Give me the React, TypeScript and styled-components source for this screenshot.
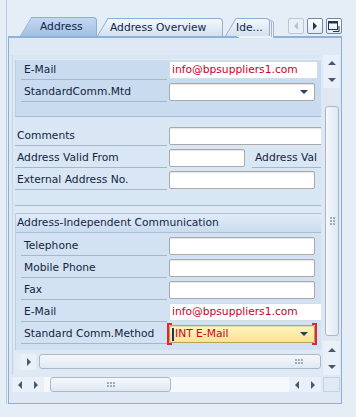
import React from 'react';
import styled, { createGlobalStyle, css } from 'styled-components';

const GlobalStyle = createGlobalStyle`
  html, body {
    margin: 0;
    padding: 0;
    background: #e5edf6;
  }
  body {
    width: 356px;
    height: 417px;
    overflow: hidden;
    font-family: "DejaVu Sans", "Liberation Sans", sans-serif;
    font-size: 10.7px;
    color: #13233f;
  }
  * { box-sizing: border-box; }
`;

const Page = styled.div`
  height: 417px;
  padding-left: 6px;
`;

const Frame = styled.div`
  width: 337px;
  height: 404px;
  border-left: 1px solid #b4c8de;
  padding-left: 1px;
  display: flex;
  flex-direction: column;
`;

// ---------- tab strip ----------

const TabStrip = styled.div`
  height: 36px;
  display: flex;
  align-items: flex-end;
  padding-left: 12px;
`;

const tabBg = (active?: boolean) =>
  active
    ? 'linear-gradient(#c3d8ef, #a2c0e3)'
    : 'linear-gradient(#f3f7fc, #d2e1f1)';

const Tab = styled.div<{ $active?: boolean; $gap?: number }>`
  position: relative;
  height: ${p => (p.$active ? 19 : 18)}px;
  margin-left: ${p => p.$gap ?? 0}px;
  padding-left: 11px;
  z-index: ${p => (p.$active ? 2 : 1)};
  &::before {
    content: '';
    position: absolute;
    left: 0;
    top: 0;
    bottom: 0;
    width: 20px;
    background: ${p => tabBg(p.$active)};
    border-left: 1px solid #8daed5;
    border-top: 1px solid #8daed5;
    transform-origin: bottom left;
    transform: skewX(-31deg);
  }
`;

const TabBody = styled.div<{ $active?: boolean; $w: number; $pad: number; $stacked?: boolean }>`
  position: relative;
  width: ${p => p.$w}px;
  height: 100%;
  padding-left: ${p => p.$pad}px;
  background: ${p => tabBg(p.$active)};
  border-top: 1px solid #8daed5;
  border-right: 1px solid #8daed5;
  border-top-right-radius: 4px;
  line-height: 17px;
  color: #102647;
  white-space: nowrap;
  ${p =>
    p.$stacked &&
    css`
      box-shadow: 1px 1px 0 0 #eef3fa, 2px 1px 0 0 #9db6d3, 3px 2px 0 0 #eef3fa, 4px 2px 0 0 #9db6d3;
    `}
`;

const TabNav = styled.div`
  align-self: flex-start;
  margin: 18px 1px 0 auto;
  display: flex;
  gap: 3px;
`;

const NavButton = styled.div<{ $disabled?: boolean }>`
  width: 16px;
  height: 16px;
  border: 1px solid ${p => (p.$disabled ? '#b6c7db' : '#6f89aa')};
  border-radius: 2px;
  background: ${p => (p.$disabled ? '#e9eff7' : 'linear-gradient(#ffffff, #e2eaf4)')};
  display: flex;
  align-items: center;
  justify-content: center;
`;

// ---------- arrows ----------

const Arrow = styled.span<{ $dir: 'up' | 'down' | 'left' | 'right'; $color?: string; $size?: number }>`
  width: 0;
  height: 0;
  ${p => {
    const c = p.$color ?? '#47586e';
    const s = p.$size ?? 4;
    switch (p.$dir) {
      case 'up':
        return `border-left:${s}px solid transparent;border-right:${s}px solid transparent;border-bottom:${s}px solid ${c};`;
      case 'down':
        return `border-left:${s}px solid transparent;border-right:${s}px solid transparent;border-top:${s}px solid ${c};`;
      case 'left':
        return `border-top:${s}px solid transparent;border-bottom:${s}px solid transparent;border-right:${s}px solid ${c};`;
      default:
        return `border-top:${s}px solid transparent;border-bottom:${s}px solid transparent;border-left:${s}px solid ${c};`;
    }
  }}
`;

// ---------- panel ----------

const Panel = styled.div`
  flex: 1;
  width: 334px;
  border: 1px solid #8daed5;
  border-top: 2px solid #8fb0d8;
  background: #dfe9f5;
  padding: 17px 1px 11px 3px;
  display: grid;
  grid-template-columns: 1fr 17px;
  grid-template-rows: 1fr 15px;
  column-gap: 2px;
  row-gap: 2px;
`;

const ScrollArea = styled.div`
  border-left: 1px solid #c3d5e9;
  padding-left: 2px;
  overflow: hidden;
  display: flex;
  flex-direction: column;
`;

const Section = styled.div`
  padding-top: 4px;
  padding-bottom: 13px;
  border-bottom: 1px solid #a9bcd1;
  background: #d9e6f4;
`;

const GroupBox = styled.div`
  height: 58px;
  background: #c9dbef;
  border-top: 1px solid #e4edf8;
  border-left: 1px solid #b8cce2;
  border-bottom: 1px solid #a7bbd2;
  padding-left: 5px;
`;

const Rows = styled.div`
  margin-top: 9px;
`;

const Group = styled.div`
  margin-top: 7px;
  background: #d3e2f3;
  border-left: 1px solid #b8cce2;
  padding-bottom: 4px;
`;

const GroupHeader = styled.div`
  height: 20px;
  border-top: 1px solid #a9bfd8;
  border-bottom: 1px solid #a9bfd8;
  background: linear-gradient(#e2ecf7, #c9dbee);
  line-height: 18px;
  padding-left: 1px;
  white-space: nowrap;
  color: #13264a;
`;

const GroupRows = styled.div`
  padding: 3px 0 0 5px;
`;

const Row = styled.div`
  height: 22px;
  display: flex;
  align-items: flex-start;
  white-space: nowrap;
`;

const Label = styled.div<{ $w: number; $pad: number; $ml?: number }>`
  flex: none;
  width: ${p => p.$w}px;
  height: 20px;
  margin-left: ${p => p.$ml ?? 0}px;
  padding-left: ${p => p.$pad}px;
  line-height: 19px;
  border-bottom: 1px solid #a6b7ca;
  overflow: hidden;
`;

const Field = styled.div<{ $w: number; $out?: boolean; $focus?: boolean }>`
  position: relative;
  flex: none;
  width: ${p => p.$w}px;
  height: 18px;
  margin: 1px 0 0 2px;
  border: 1px solid ${p => (p.$out ? '#d3dde8' : p.$focus ? '#b9a25a' : '#a9a9a9')};
  border-radius: 2px;
  background: ${p => (p.$focus ? 'linear-gradient(#fff3bf, #fbe38f)' : '#ffffff')};
  box-shadow: ${p => (p.$out ? 'none' : 'inset 0 1px 1px rgba(0,0,0,0.1)')};
  color: #d0002c;
  line-height: 16px;
  padding-left: 2px;
  display: flex;
  align-items: center;
`;

const DropArrow = styled.span`
  position: absolute;
  right: 6px;
  top: 6px;
  width: 0;
  height: 0;
  border-left: 4px solid transparent;
  border-right: 4px solid transparent;
  border-top: 4px solid #263d63;
`;

const Bracket = styled.span<{ $side: 'left' | 'right' }>`
  position: absolute;
  top: -3px;
  bottom: -3px;
  width: 5px;
  ${p => (p.$side === 'left' ? 'left: -3px;' : 'right: -3px;')}
  border: 2px solid #e0262e;
  ${p => (p.$side === 'left' ? 'border-right: none;' : 'border-left: none;')}
`;

const Caret = styled.span`
  width: 2px;
  height: 13px;
  margin-right: 1px;
  background: #1d2f66;
`;

// ---------- scroll bars ----------

const InnerHScroll = styled.div`
  margin-top: 4px;
  height: 16px;
  display: flex;
  gap: 3px;
`;

const Spacer = styled.div`
  width: 6px;
  margin-right: -3px;
  background: #e4ecf5;
`;

const SBtn = styled.div<{ $h?: number; $w?: number }>`
  flex: none;
  width: ${p => p.$w ?? 16}px;
  height: ${p => p.$h ?? 16}px;
  background: #e9f0f8;
  display: flex;
  align-items: center;
  justify-content: center;
`;

const HThumb = styled.div<{ $w?: number; $ml?: number; $gripEnd?: boolean }>`
  ${p => (p.$w ? `width: ${p.$w}px; flex: none;` : 'flex: 1;')}
  margin-left: ${p => p.$ml ?? 0}px;
  height: 15px;
  border: 1px solid #a9b8c9;
  border-radius: 3px;
  background: linear-gradient(#f5f8fc, #dfe8f2);
  display: flex;
  align-items: center;
  justify-content: ${p => (p.$gripEnd ? 'flex-end' : 'center')};
  padding-right: ${p => (p.$gripEnd ? 17 : 0)}px;
`;

const VScroll = styled.div`
  display: flex;
  flex-direction: column;
  background: #e3ebf4;
`;

const VTrack = styled.div`
  flex: 1;
  background: #dfe8f2;
  padding: 18px 1px 0 2px;
`;

const VThumb = styled.div`
  height: 230px;
  border: 1px solid #a9b8c9;
  border-radius: 3px;
  background: linear-gradient(90deg, #f5f8fc, #dfe8f2);
  display: flex;
  align-items: center;
  justify-content: center;
`;

const HScroll = styled.div`
  display: flex;
  background: #e9f0f8;
`;

const HTrack = styled.div`
  flex: 1;
  display: flex;
  background: #f6f9fc;
`;

const Corner = styled.div`
  background: #e1eaf4;
  border: 1px solid #c6d5e5;
`;

const Grip = ({ vertical }: { vertical?: boolean }) => {
  const cols = vertical ? 2 : 3;
  const rows = vertical ? 3 : 2;
  const dots = [];
  for (let r = 0; r < rows; r++)
    for (let c = 0; c < cols; c++)
      dots.push(<rect key={`${r}-${c}`} x={c * 3} y={r * 3} width={2} height={2} fill="#9eacbd" />);
  return (
    <svg width={cols * 3 - 1} height={rows * 3 - 1}>
      {dots}
    </svg>
  );
};

const WindowIcon = () => (
  <svg width="12" height="11" viewBox="0 0 12 11">
    <rect x="0.5" y="0.5" width="9" height="8" fill="none" stroke="#24364f" />
    <rect x="0.5" y="0.5" width="9" height="2" fill="#24364f" />
    <path d="M11 5 V10.5 H5" fill="none" stroke="#24364f" />
  </svg>
);

const EMAIL = 'info@bpsuppliers1.com';

const App = () => {
  return (
    <Page>
      <GlobalStyle />
      <Frame>
        <TabStrip>
          <Tab $active>
            <TabBody $active $w={66} $pad={9}>Address</TabBody>
          </Tab>
          <Tab>
            <TabBody $w={115} $pad={2}>Address Overview</TabBody>
          </Tab>
          <Tab $gap={2}>
            <TabBody $w={34} $pad={0} $stacked>Ide...</TabBody>
          </Tab>
          <TabNav>
            <NavButton $disabled>
              <Arrow $dir="left" $color="#b3c2d4" />
            </NavButton>
            <NavButton>
              <Arrow $dir="right" $color="#22344d" />
            </NavButton>
            <NavButton>
              <WindowIcon />
            </NavButton>
          </TabNav>
        </TabStrip>

        <Panel>
          <ScrollArea>
            <Section>
              <GroupBox>
                <Row>
                  <Label $w={146} $pad={3}>E-Mail</Label>
                  <Field $w={149} $out>{EMAIL}</Field>
                </Row>
                <Row>
                  <Label $w={146} $pad={3}>StandardComm.Mtd</Label>
                  <Field $w={146}>
                    <DropArrow />
                  </Field>
                </Row>
              </GroupBox>
              <Rows>
                <Row>
                  <Label $w={152} $pad={2}>Comments</Label>
                  <Field $w={154} />
                </Row>
                <Row>
                  <Label $w={152} $pad={2}>Address Valid From</Label>
                  <Field $w={76} />
                  <Label $w={70} $pad={3} $ml={7}>Address Val</Label>
                </Row>
                <Row>
                  <Label $w={152} $pad={2}>External Address No.</Label>
                  <Field $w={146} />
                </Row>
              </Rows>
            </Section>

            <Group>
              <GroupHeader>Address-Independent Communication</GroupHeader>
              <GroupRows>
                <Row>
                  <Label $w={146} $pad={3}>Telephone</Label>
                  <Field $w={146} />
                </Row>
                <Row>
                  <Label $w={146} $pad={3}>Mobile Phone</Label>
                  <Field $w={146} />
                </Row>
                <Row>
                  <Label $w={146} $pad={3}>Fax</Label>
                  <Field $w={146} />
                </Row>
                <Row>
                  <Label $w={146} $pad={3}>E-Mail</Label>
                  <Field $w={154} $out>{EMAIL}</Field>
                </Row>
                <Row>
                  <Label $w={146} $pad={3}>Standard Comm.Method</Label>
                  <Field $w={146} $focus>
                    <Caret />
                    INT E-Mail
                    <DropArrow />
                    <Bracket $side="left" />
                    <Bracket $side="right" />
                  </Field>
                </Row>
              </GroupRows>
            </Group>

            <InnerHScroll>
              <Spacer />
              <SBtn $w={15}>
                <Arrow $dir="right" />
              </SBtn>
              <HThumb $gripEnd>
                <Grip />
              </HThumb>
            </InnerHScroll>
          </ScrollArea>

          <VScroll>
            <SBtn $w={17}>
              <Arrow $dir="up" />
            </SBtn>
            <SBtn $w={17} $h={17}>
              <Arrow $dir="down" />
            </SBtn>
            <VTrack>
              <VThumb>
                <Grip vertical />
              </VThumb>
            </VTrack>
            <SBtn $w={17} $h={17}>
              <Arrow $dir="up" />
            </SBtn>
            <SBtn $w={17} $h={17}>
              <Arrow $dir="down" />
            </SBtn>
          </VScroll>

          <HScroll>
            <SBtn $h={15}>
              <Arrow $dir="left" />
            </SBtn>
            <SBtn $h={15}>
              <Arrow $dir="right" />
            </SBtn>
            <HTrack>
              <HThumb $w={121} $ml={6}>
                <Grip />
              </HThumb>
            </HTrack>
            <SBtn $h={15}>
              <Arrow $dir="left" />
            </SBtn>
            <SBtn $h={15}>
              <Arrow $dir="right" />
            </SBtn>
          </HScroll>
          <Corner />
        </Panel>
      </Frame>
    </Page>
  );
};

export default App;
